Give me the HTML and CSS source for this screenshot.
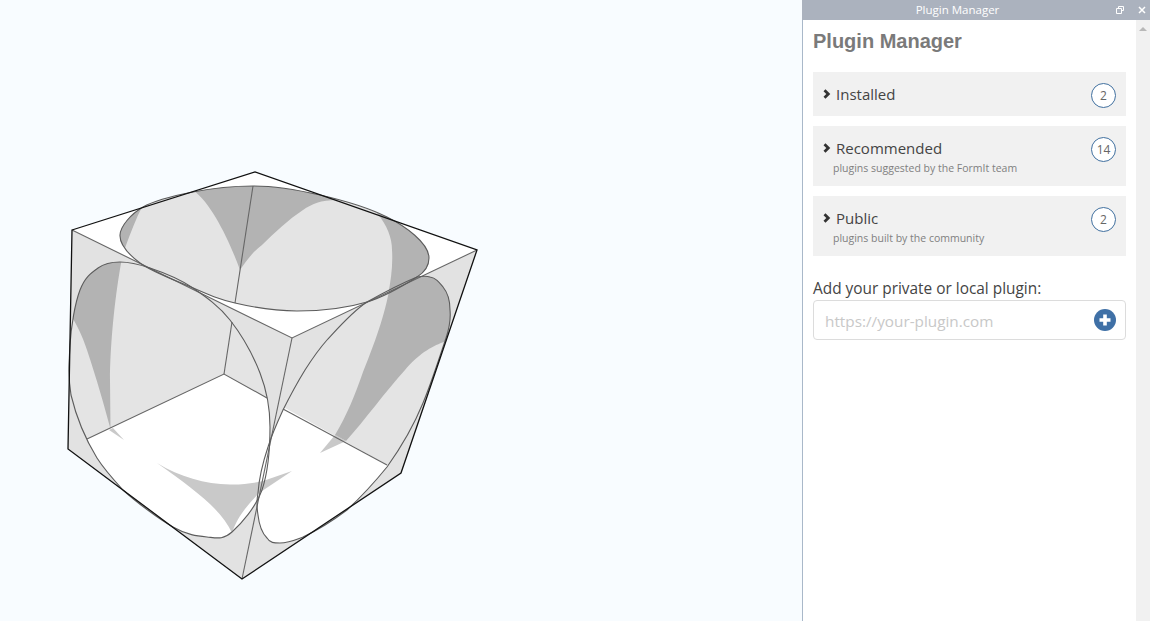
FILE: index.html
```html
<!DOCTYPE html>
<html lang="en">
<head>
<meta charset="utf-8">
<title>Plugin Manager</title>
<link rel="stylesheet" href="styles.css">
</head>
<body>
<div class="app">
  <main class="viewport">
    <svg class="scene" viewBox="0 0 802 621" width="802" height="621">
      <defs>
        <path id="ell" d="M253,186 C274,186 298,190 320,195 C342,200 367,207 387,217 C405,226 429,243 429,258 C429,266 425,272 417,277 C406,284 387,296 367,302 C347,308 319,311 297,311 C275,311 252,307 235,303 C218,299 209,295 193,288 C177,281 152,272 140,263 C128,254 119.5,244 120,235 C120.5,226 131,214 143,207 C155,200 175,195.5 193,192 C211,188.5 232,186 253,186 Z"/>
        <path id="lc" d="M120,262 C129,262 138,264 150,268 C162,272 180,279 193,288 C206,297 219,306 230,320 C241,334 253,355 260,373 C267,391 270,407 270,427 C270,447 268,472 262,490 C256,507 241,524 232,532 C223,540 217,538 207,537 C197,536 187,535 173,527 C159,519 136,502 123,490 C112,478 104,469 97,458 C86,440 76,416 71,395 C68,376 69,362.5 70,345 C71,327 75,303 80,290 C85,277 91,273 98,268 C105,263 111,262 120,262 Z"/>
        <path id="rc" d="M417,277 C423,276 427,276 430,277 C436,278 439,282 443,287 C448,293 450,300 450,310 C451,320 449,329 446,338 C438,362 431,384 423,403 C414,425 402,446 387,467 C374,483 361,497 347,510 C331,522 316,531 303,537 C295,540 288,543 280,543 C274,543 270,543 267,538 C262,533 259,524 258,515 C257,508 256,503 258,493 C259,478 263,462 268,447 C272,434 277,423 283,410 C290,396 297,383 305,370 C312,359 319,349 327,340 C339,327 353,311 367,302 C383,293 400,284 417,277 Z"/>
        <clipPath id="clip-ell"><use href="#ell"/></clipPath>
        <clipPath id="clip-lc"><use href="#lc"/></clipPath>
        <clipPath id="clip-rc"><use href="#rc"/></clipPath>
        <clipPath id="clip-floor"><polygon points="60,452 224,374 400,472 300,600 60,600"/></clipPath>
      </defs>

      <polygon class="wall" points="72,230 68,449 242,579 401,473 477,250 292,338"/>
      <polygon class="white" points="72,230 255,172 477,250 292,338"/>

      <use href="#lc" class="face"/>
      <use href="#rc" class="face"/>
      <g clip-path="url(#clip-floor)">
        <use href="#lc" class="white"/>
        <use href="#rc" class="white"/>
      </g>

      <g clip-path="url(#clip-lc)">
        <path class="shade" d="M122,258 C114,300 110,350 110,380 L110.5,429 C104,405 97,380 87,350 C82,335 76,322 68,312 L60,255 Z"/>
        <polygon class="shade-soft" points="109,430 113,428 124,440"/>
        <path class="shade-soft" d="M157,463 C180,477 205,484 230,484.5 C252,485 273,480 292,471 L259,493 C248,505 238,515 232,533 C222,510 195,490 157,463 Z"/>
      </g>
      <g clip-path="url(#clip-rc)">
        <path class="shade" d="M390,285 C386,310 378,335 363,372 C355,395 347,415 335,435 L346,441 C365,420 385,392 405,370 C420,352 435,345 444,342 L470,330 L460,265 L410,265 Z"/>
        <polygon class="shade-soft" points="335,435 346,441 320,453"/>
      </g>
      <polygon class="shade-soft" points="259,493 292,471 263,481"/>

      <use href="#ell" class="face"/>
      <g clip-path="url(#clip-ell)">
        <path class="shade" d="M143,205 C136,218 131,232 125,248 L110,240 L130,200 Z"/>
        <path class="shade" d="M193,190 C212,204 229,240 240,270 C248,258 255,250 262,245 C275,232 288,220 303,210 C312,204 320,200 338,200 L300,175 L200,175 Z"/>
        <path class="shade" d="M377,213 C387,225 392,238 392,250 C393,265 391,280 388,295 L440,300 L440,210 Z"/>
      </g>

      <line class="edge" x1="253" y1="186" x2="235" y2="303"/>
      <line class="edge" x1="232" y1="322" x2="224" y2="374"/>
      <polyline class="edge" points="87,439 224,374 267,398"/>
      <line class="edge" x1="283" y1="409" x2="387" y2="465"/>
      <line class="edge" x1="292" y1="338" x2="242" y2="579"/>
      <polyline class="edge" points="72,230 292,338 477,250"/>
      <use href="#lc" class="curve"/>
      <use href="#rc" class="curve"/>
      <use href="#ell" class="curve"/>
      <polygon class="outline" points="72,230 255,172 477,250 401,473 242,579 68,449"/>
    </svg>
  </main>

  <aside class="panel">
    <header class="titlebar">
      <span class="titlebar-text">Plugin Manager</span>
      <svg class="win-icon win-restore" viewBox="0 0 8 8" width="8" height="8"><path d="M2.5 2V.5h5v4H6M.5 2.5h5v5h-5z"/></svg>
      <svg class="win-icon win-close" viewBox="0 0 8 8" width="8" height="8"><path d="M1 1l6 6M7 1L1 7"/></svg>
    </header>
    <div class="panel-body">
      <div class="content">
        <h1 class="heading">Plugin Manager</h1>
        <section class="card card-short">
          <div class="card-main">
            <div class="card-title">
              <svg class="chev" viewBox="0 0 8 10" width="8" height="10"><path d="M1.5 1.2l3.8 3.8-3.8 3.8"/></svg>
              <span>Installed</span>
            </div>
          </div>
          <span class="badge">2</span>
        </section>
        <section class="card">
          <div class="card-main">
            <div class="card-title">
              <svg class="chev" viewBox="0 0 8 10" width="8" height="10"><path d="M1.5 1.2l3.8 3.8-3.8 3.8"/></svg>
              <span>Recommended</span>
            </div>
            <p class="card-sub">plugins suggested by the FormIt team</p>
          </div>
          <span class="badge">14</span>
        </section>
        <section class="card">
          <div class="card-main">
            <div class="card-title">
              <svg class="chev" viewBox="0 0 8 10" width="8" height="10"><path d="M1.5 1.2l3.8 3.8-3.8 3.8"/></svg>
              <span>Public</span>
            </div>
            <p class="card-sub">plugins built by the community</p>
          </div>
          <span class="badge">2</span>
        </section>
        <label class="add-label">Add your private or local plugin:</label>
        <div class="add-box">
          <span class="placeholder">https://your-plugin.com</span>
          <svg class="add-btn" viewBox="0 0 22 22" width="22" height="22"><circle cx="11" cy="11" r="11"/><path d="M11 5.5v11M5.5 11h11"/></svg>
        </div>
      </div>
      <div class="scrollbar"><span class="scroll-up"></span></div>
    </div>
  </aside>
</div>
</body>
</html>
```
FILE: styles.css
```css
* { box-sizing: border-box; }
html, body { margin: 0; height: 100%; overflow: hidden; }
body { font-family: "Open Sans", "Noto Sans", sans-serif; background: #f8fcff; }
.app { display: flex; height: 621px; width: 1150px; }
.viewport { width: 802px; flex: none; background: #f8fcff; }
.scene { display: block; }
.wall { fill: #e2e2e2; }
.white { fill: #fff; }
.face { fill: #e4e4e4; }
.shade { fill: #b3b3b3; }
.shade-soft { fill: #c9c9c9; }
.edge { stroke: #666; stroke-width: 1.1; fill: none; }
.curve { stroke: #5c5c5c; stroke-width: 1.1; fill: none; }
.outline { stroke: #111; stroke-width: 1.3; fill: none; stroke-linejoin: miter; }

.panel { width: 348px; flex: none; display: flex; flex-direction: column; background: #fff; border-left: 1px solid #a9b8c9; }
.titlebar { height: 20px; flex: none; background: #abb2be; display: flex; align-items: center; color: #fff; margin-left: -1px; }
.titlebar-text { width: 311px; text-align: center; font-size: 11.5px; line-height: 16px; }
.win-icon { flex: none; fill: none; stroke: #fff; }
.win-restore { margin-left: 3px; stroke-width: 1; }
.win-close { margin-left: 14px; stroke-width: 1.5; }

.panel-body { flex: 1; display: flex; min-height: 0; }
.content { width: 333px; flex: none; padding: 0 10px; }
.heading { margin: 9px 0 19px; font: bold 20px/24px "Liberation Sans", Arial, sans-serif; color: #7a7a7a; }
.card { height: 60px; background: #f1f1f1; margin-bottom: 10px; display: flex; justify-content: space-between; padding: 11px 10px 0 10px; }
.card-short { height: 44px; }
.card-title { display: flex; align-items: center; gap: 5px; font-size: 15px; line-height: 22px; color: #444; }
.card-sub { margin: 2px 0 0 10px; font-size: 10.5px; line-height: 15px; color: #808080; }
.chev { flex: none; fill: none; stroke: #333; stroke-width: 2.8; }
.badge { width: 25px; height: 25px; border: 1px solid #41709f; border-radius: 50%; display: flex; align-items: center; justify-content: center; font-size: 12px; color: #666; flex: none; background: #fff; }
.add-label { display: block; margin-top: 21px; margin-bottom: -1px; font-size: 15.4px; line-height: 24px; color: #444; }
.add-box { height: 40px; border: 1px solid #dcdcdc; border-radius: 4px; display: flex; align-items: center; justify-content: space-between; padding: 1px 9px 0 11px; }
.placeholder { font-size: 15.3px; color: #c8c8c8; }
.add-btn { flex: none; fill: #3f70a6; stroke: none; margin-top: -1px; }
.add-btn path { stroke: #fff; stroke-width: 3.6; fill: none; }
.scrollbar { width: 14px; flex: none; background: #f1f1f1; display: flex; justify-content: center; padding-top: 7px; }
.scroll-up { width: 0; height: 0; border-left: 4px solid transparent; border-right: 4px solid transparent; border-bottom: 4px solid #b8b8b8; }
```
